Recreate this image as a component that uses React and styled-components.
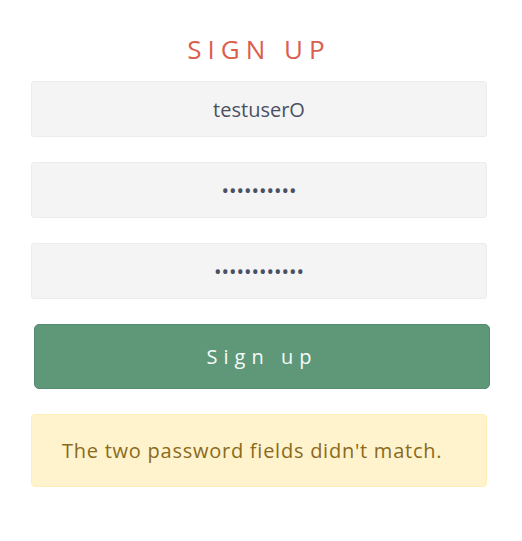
import styled, {createGlobalStyle} from "styled-components";

const GlobalStyle = createGlobalStyle`
  body {
    margin: 0;
    background-color: #ffffff;
    font-family: "Open Sans", "Noto Sans", sans-serif;
  }
`;

const Page = styled.main`
  width: 456px;
  padding: 31px 0 0 31px;
`;

const Title = styled.h1`
  margin: 0 0 14px 0;
  text-align: center;
  font-size: 26px;
  font-weight: 400;
  line-height: 36px;
  letter-spacing: 6px;
  color: #d9604f;
`;

const Form = styled.form`
  display: flex;
  flex-direction: column;
  gap: 25px;
`;

const Input = styled.input`
  box-sizing: border-box;
  width: 100%;
  height: 56px;
  padding: 0 12px;
  border: 1px solid #ececef;
  border-radius: 3px;
  background-color: #f4f4f4;
  font-family: inherit;
  font-size: 20px;
  text-align: center;
  color: #4a5064;
  outline: none;
`;

const SubmitButton = styled.button`
  box-sizing: border-box;
  width: 100%;
  height: 65px;
  margin-left: 3px;
  border: 1px solid #558b6e;
  border-radius: 5px;
  background-color: #5f9779;
  font-family: inherit;
  font-size: 20px;
  letter-spacing: 6px;
  color: #f6fbf8;
  cursor: pointer;
`;

const Alert = styled.div`
  box-sizing: border-box;
  margin-top: 25px;
  height: 73px;
  padding: 0 30px;
  display: flex;
  align-items: center;
  border: 1px solid #ffeeba;
  border-radius: 4px;
  background-color: #fff3cd;
  font-size: 20px;
  letter-spacing: 0.75px;
  color: #8a6a1c;
`;

export default function App() {
  return (
    <Page>
      <GlobalStyle />
      <Title>SIGN UP</Title>
      <Form onSubmit={(e) => e.preventDefault()}>
        <Input type="text" defaultValue="testuserO" />
        <Input type="password" defaultValue="0123456789" />
        <Input type="password" defaultValue="012345678901" />
        <SubmitButton type="submit">Sign up</SubmitButton>
      </Form>
      <Alert>The two password fields didn't match.</Alert>
    </Page>
  );
}
